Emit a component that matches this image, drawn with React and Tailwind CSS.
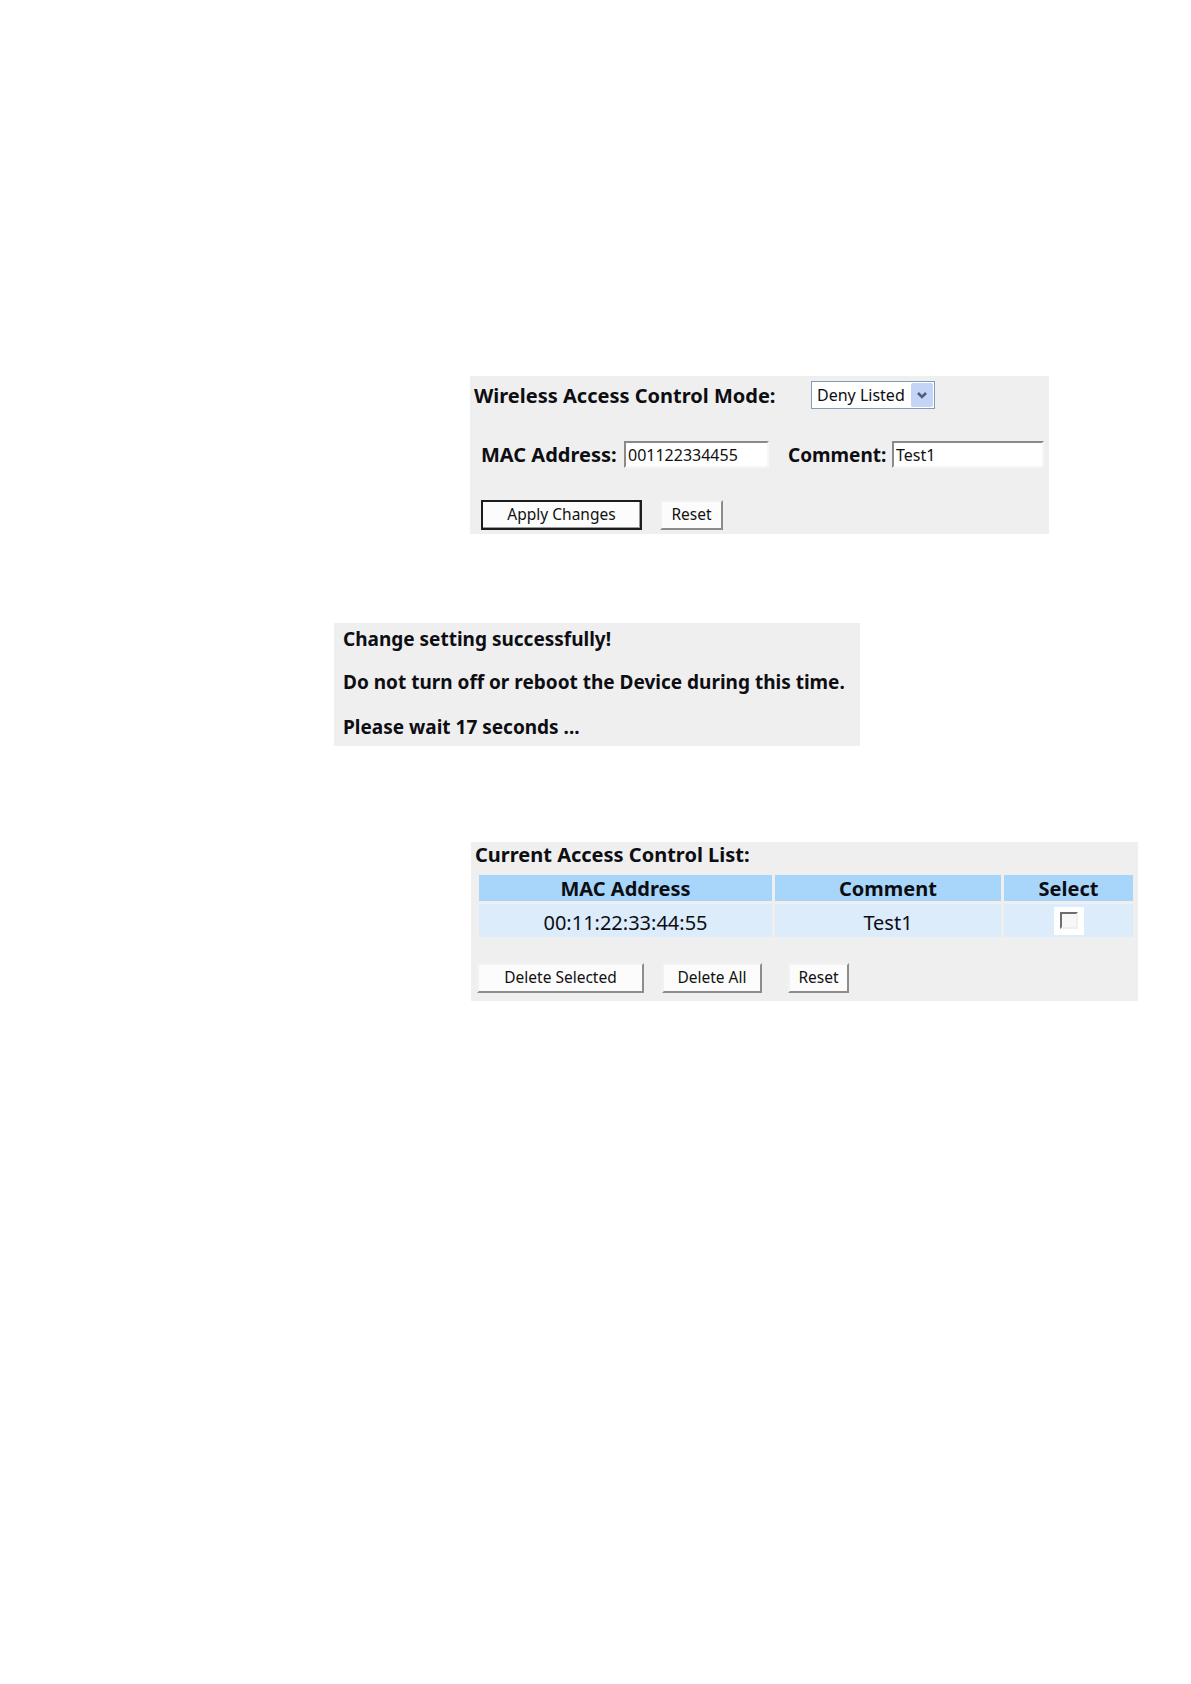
import React from 'react';

// XP-style form widgets, drawn with borders
const bevelOut = 'border-2 border-t-[#f2f2f2] border-l-[#f2f2f2] border-b-[#8c8c8c] border-r-[#8c8c8c] bg-[#fcfcfc]';
const bevelIn = 'border-2 border-t-[#8a8a8a] border-l-[#8a8a8a] border-b-[#f6f6f6] border-r-[#f6f6f6] bg-white';

const Button = ({ children, w, strong }) => (
    <div
        className={`flex items-center justify-center h-[30px] text-[15.5px] text-[#111] ${w} ${
            strong ? 'border-2 border-[#1c1c1c] bg-[#fcfcfc] shadow-[inset_-1px_-1px_0_#9a9a9a]' : bevelOut
        }`}
    >
        {children}
    </div>
);

const TextBox = ({ value, w }) => (
    <div className={`flex items-center h-[27px] pl-[2px] text-[16px] text-[#111] ${w} ${bevelIn}`}>
        {value}
    </div>
);

const ROWS = [{ mac: '00:11:22:33:44:55', comment: 'Test1' }];

export default function App() {
    return (
        <div className="w-[1191px] min-h-[1684px] bg-white font-['Noto_Sans',sans-serif] text-[#0d0d12] flex flex-col items-start">
            {/* Access control mode form */}
            <div className="ml-[470px] mt-[376px] w-[579px] bg-[#efefef] pt-[5px] pb-[4px]">
                <div className="flex items-center h-[28px] pl-[4px]">
                    <div className="w-[337px] pt-[2px] font-bold text-[20px]">Wireless Access Control Mode:</div>
                    <div className="flex items-center justify-between w-[124px] h-[28px] border border-[#7f9db9] bg-white pl-[5px] pr-[1px]">
                        <span className="text-[16px]">Deny Listed</span>
                        <div className="flex items-center justify-center w-[22px] h-[24px] bg-[#c3d4f7] rounded-[2px]">
                            <svg width="12" height="10" viewBox="0 0 12 10">
                                <path d="M2 3 L6 7 L10 3" fill="none" stroke="#4a5f8a" strokeWidth="2.6" />
                            </svg>
                        </div>
                    </div>
                </div>

                <div className="flex items-center h-[27px] mt-[32px] pl-[11px]">
                    <div className="w-[143px] pt-[1px] font-bold text-[20px]">MAC Address:</div>
                    <TextBox value="001122334455" w="w-[145px]" />
                    <div className="ml-[19px] w-[104px] pt-[1px] font-bold text-[19px]">Comment:</div>
                    <TextBox value="Test1" w="w-[152px]" />
                </div>

                <div className="flex items-center gap-[18px] mt-[32px] pl-[11px]">
                    <Button w="w-[161px]" strong>Apply Changes</Button>
                    <Button w="w-[63px]">Reset</Button>
                </div>
            </div>

            {/* Status message */}
            <div className="ml-[334px] mt-[89px] w-[526px] bg-[#efefef] pt-[4px] pb-[7px] pl-[9px] flex flex-col gap-[19px] font-bold text-[19px] leading-[24px]">
                <p>Change setting successfully!</p>
                <p>Do not turn off or reboot the Device during this time.</p>
                <p className="mt-[2px]">Please wait 17 seconds ...</p>
            </div>

            {/* Current list */}
            <div className="ml-[471px] mt-[96px] w-[667px] bg-[#efefef] pt-[2px] pb-[8px]">
                <div className="pl-[4px] font-bold text-[20px] leading-[22px]">Current Access Control List:</div>

                <div className="ml-[8px] mt-[9px] grid grid-cols-[293px_226px_129px] gap-[3px]">
                    <div className="h-[26px] bg-[#a8d6fa] flex items-center justify-center pt-[1px] font-bold text-[20px]">MAC Address</div>
                    <div className="h-[26px] bg-[#a8d6fa] flex items-center justify-center pt-[1px] font-bold text-[20px]">Comment</div>
                    <div className="h-[26px] bg-[#a8d6fa] flex items-center justify-center pt-[1px] font-bold text-[20px]">Select</div>
                    {ROWS.map((r) => (
                        <React.Fragment key={r.mac}>
                            <div className="h-[33px] bg-[#dcecfb] flex items-center justify-center pt-[4px] text-[20px]">{r.mac}</div>
                            <div className="h-[33px] bg-[#dcecfb] flex items-center justify-center pt-[4px] text-[20px]">{r.comment}</div>
                            <div className="h-[33px] bg-[#dcecfb] flex items-center justify-center">
                                <div className="w-[30px] h-[28px] bg-white flex items-center justify-center">
                                    <div className="w-[18px] h-[17px] border-2 border-t-[#6e6e6e] border-l-[#6e6e6e] border-b-[#efefef] border-r-[#efefef] bg-[#f7f7f7]" />
                                </div>
                            </div>
                        </React.Fragment>
                    ))}
                </div>

                <div className="flex items-center mt-[26px] pl-[6px]">
                    <Button w="w-[167px]">Delete Selected</Button>
                    <div className="ml-[18px]"><Button w="w-[100px]">Delete All</Button></div>
                    <div className="ml-[26px]"><Button w="w-[61px]">Reset</Button></div>
                </div>
            </div>
        </div>
    );
}
